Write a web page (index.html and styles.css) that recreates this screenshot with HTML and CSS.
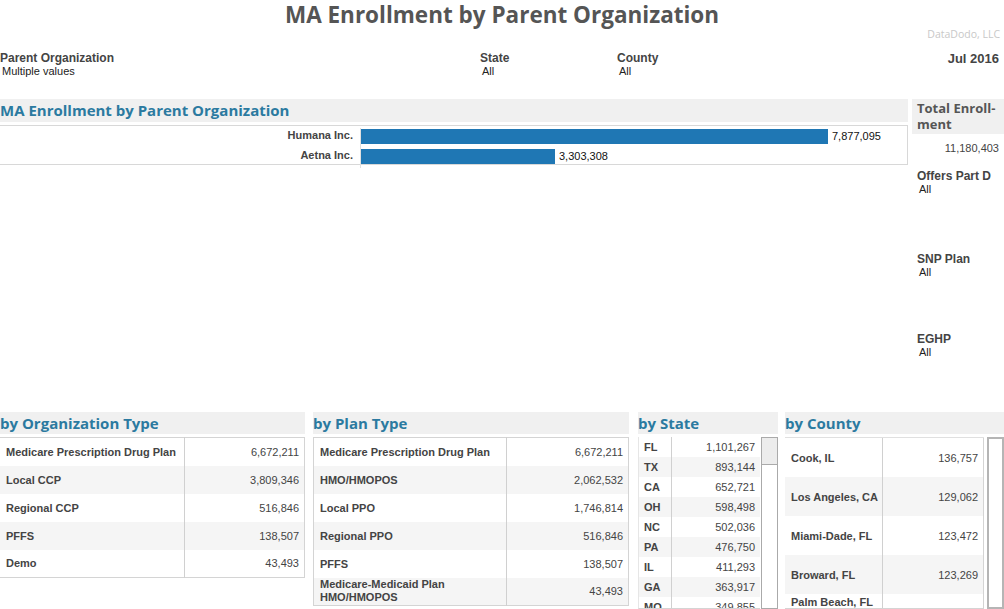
FILE: index.html
```html
<!DOCTYPE html>
<html>
<head>
<meta charset="utf-8">
<link rel="stylesheet" href="styles.css">
</head>
<body>
<div class="page">
  <h1 class="title">MA Enrollment by Parent Organization</h1>
  <div class="credit">DataDodo, LLC</div>
  <div class="filters">
    <div class="filter"><div class="f-label">Parent Organization</div><div class="f-value">Multiple values</div></div>
    <div class="filter"><div class="f-label">State</div><div class="f-value">All</div></div>
    <div class="filter"><div class="f-label">County</div><div class="f-value">All</div></div>
    <div class="date">Jul 2016</div>
  </div>

  <div class="middle">
    <div class="chart-panel">
      <div class="sec-head">MA Enrollment by Parent Organization</div>
      <div class="chart">
        <div class="bar-row"><div class="bar-label">Humana Inc.</div><div class="bar-track"><div class="bar" style="width:467px"></div><span class="bar-val">7,877,095</span></div></div>
        <div class="bar-row"><div class="bar-label">Aetna Inc.</div><div class="bar-track"><div class="bar" style="width:194px"></div><span class="bar-val">3,303,308</span></div></div>
      </div>
    </div>
    <div class="side">
      <div class="total-head">Total Enroll-<br>ment</div>
      <div class="total-val">11,180,403</div>
      <div class="side-filter sf1"><div class="f-label">Offers Part D</div><div class="f-value">All</div></div>
      <div class="side-filter sf2"><div class="f-label">SNP Plan</div><div class="f-value">All</div></div>
      <div class="side-filter sf3"><div class="f-label">EGHP</div><div class="f-value">All</div></div>
    </div>
  </div>

  <div class="bottom">
    <div class="panel p-org">
      <div class="sec-head small">by Organization Type</div>
      <table class="tbl t28">
        <tr><td class="k">Medicare Prescription Drug Plan</td><td class="v">6,672,211</td></tr>
        <tr><td class="k">Local CCP</td><td class="v">3,809,346</td></tr>
        <tr><td class="k">Regional CCP</td><td class="v">516,846</td></tr>
        <tr><td class="k">PFFS</td><td class="v">138,507</td></tr>
        <tr><td class="k">Demo</td><td class="v">43,493</td></tr>
      </table>
    </div>
    <div class="panel p-plan">
      <div class="sec-head small">by Plan Type</div>
      <table class="tbl t28 plan">
        <tr><td class="k">Medicare Prescription Drug Plan</td><td class="v">6,672,211</td></tr>
        <tr><td class="k">HMO/HMOPOS</td><td class="v">2,062,532</td></tr>
        <tr><td class="k">Local PPO</td><td class="v">1,746,814</td></tr>
        <tr><td class="k">Regional PPO</td><td class="v">516,846</td></tr>
        <tr><td class="k">PFFS</td><td class="v">138,507</td></tr>
        <tr><td class="k two">Medicare-Medicaid Plan<br>HMO/HMOPOS</td><td class="v">43,493</td></tr>
      </table>
    </div>
    <div class="panel p-state">
      <div class="sec-head small">by State</div>
      <div class="scroll-wrap">
        <div class="clip state-clip">
          <table class="tbl t20 state">
            <tr><td class="k">FL</td><td class="v">1,101,267</td></tr>
            <tr><td class="k">TX</td><td class="v">893,144</td></tr>
            <tr><td class="k">CA</td><td class="v">652,721</td></tr>
            <tr><td class="k">OH</td><td class="v">598,498</td></tr>
            <tr><td class="k">NC</td><td class="v">502,036</td></tr>
            <tr><td class="k">PA</td><td class="v">476,750</td></tr>
            <tr><td class="k">IL</td><td class="v">411,293</td></tr>
            <tr><td class="k">GA</td><td class="v">363,917</td></tr>
            <tr><td class="k">MO</td><td class="v">349,855</td></tr>
          </table>
        </div>
        <div class="scrollbar"><div class="thumb"></div></div>
      </div>
    </div>
    <div class="panel p-county">
      <div class="sec-head small">by County</div>
      <div class="scroll-wrap">
        <div class="clip county-clip">
          <table class="tbl t39 county">
            <tr><td class="k">Cook, IL</td><td class="v">136,757</td></tr>
            <tr><td class="k">Los Angeles, CA</td><td class="v">129,062</td></tr>
            <tr><td class="k">Miami-Dade, FL</td><td class="v">123,472</td></tr>
            <tr><td class="k">Broward, FL</td><td class="v">123,269</td></tr>
            <tr class="last"><td class="k">Palm Beach, FL</td><td class="v">118,004</td></tr>
          </table>
        </div>
        <div class="scrollbar county-bar"></div>
      </div>
    </div>
  </div>
</div>
</body>
</html>
```

FILE: styles.css
```css
* { box-sizing: border-box; }
html, body { margin: 0; padding: 0; background: #fff; }
body {
  width: 1004px;
  height: 609px;
  overflow: hidden;
  font-family: "Liberation Sans", Arial, sans-serif;
  color: #333;
}
.page { width: 1004px; }

.title {
  margin: 0;
  height: 29px;
  text-align: center;
  font-family: "Open Sans", "DejaVu Sans", sans-serif;
  font-weight: 700;
  font-size: 22.5px;
  line-height: 29px;
  color: #555;
}
.credit {
  height: 12px;
  text-align: right;
  padding-right: 4px;
  font-family: "Open Sans", sans-serif;
  font-size: 10.5px;
  line-height: 10px;
  color: #c8c8c8;
}
.filters {
  display: grid;
  grid-template-columns: 480px 137px 1fr auto;
  height: 58px;
  padding-top: 11px;
}
.f-label {
  font-weight: 700;
  font-size: 12px;
  line-height: 13px;
  color: #444;
}
.f-value {
  font-size: 11px;
  line-height: 13px;
  padding-left: 2px;
  color: #222;
}
.date {
  font-weight: 700;
  font-size: 13px;
  line-height: 14px;
  color: #444;
  padding-right: 5px;
}

.middle {
  display: flex;
  gap: 4px;
  height: 313px;
}
.chart-panel { width: 908px; }
.sec-head {
  background: #f0f0f0;
  height: 23px;
  font-family: "Open Sans", sans-serif;
  font-weight: 700;
  font-size: 15px;
  line-height: 23px;
  color: #2b7aa0;
  white-space: nowrap;
}
.sec-head.small { height: 22px; line-height: 23px; }
.chart {
  margin-top: 3px;
  height: 40px;
  border: 1px solid #d8d8d8;
  border-left: 0;
  padding-top: 2px;
}
.bar-row {
  display: flex;
  height: 20px;
  align-items: stretch;
}
.bar-label {
  width: 361px;
  text-align: right;
  padding-right: 7px;
  font-weight: 700;
  font-size: 11px;
  line-height: 15px;
  color: #444;
  border-right: 1px solid #e0e0e0;
}
.bar-track {
  display: flex;
  align-items: flex-start;
  gap: 4px;
  padding-top: 1px;
}
.bar {
  height: 15px;
  background: #1f77b4;
}
.bar-val {
  font-size: 11px;
  line-height: 15px;
  color: #111;
}

.side { width: 92px; }
.total-head {
  background: #f0f0f0;
  height: 35px;
  padding: 1px 0 0 5px;
  font-family: "Open Sans", sans-serif;
  font-weight: 700;
  font-size: 13px;
  line-height: 16px;
  color: #555;
}
.total-val {
  text-align: right;
  padding-right: 5px;
  margin-top: 8px;
  font-size: 11px;
  line-height: 13px;
  color: #444;
  height: 27px;
}
.side-filter { padding-left: 5px; }
.sf1 { height: 84px; padding-top: 1px; }
.sf2 { height: 80px; }
.sf3 { height: 30px; }

.bottom {
  display: flex;
  height: 197px;
}
.panel { display: flex; flex-direction: column; }
.p-org { width: 305px; }
.p-plan { width: 316px; margin-left: 8px; }
.p-state { width: 140px; margin-left: 9px; }
.p-county { width: 219px; margin-left: 7px; }

.tbl {
  border-collapse: collapse;
  margin-top: 3px;
  font-size: 11px;
  color: #444;
}
.tbl td { padding: 0; }
.tbl tr:nth-child(even) td { background: #f5f5f5; }
.tbl td.k {
  font-weight: 700;
  padding-left: 6px;
  border-right: 1px solid #d0d0d0;
  white-space: nowrap;
}
.tbl td.v {
  text-align: right;
  padding-right: 5px;
  color: #444;
}
.t28 {
  width: 100%;
  border: 1px solid #d4d4d4;
  border-left: 0;
}
.t28 td { height: 28px; }
.p-org .t28 td.k { width: 184px; }
.plan { border-left: 1px solid #d4d4d4; }
.plan td.k { width: 193px; }
.plan td.two { line-height: 13px; }

.scroll-wrap {
  display: flex;
  margin-top: 3px;
  height: 172px;
  overflow: hidden;
}
.clip { overflow: hidden; height: 172px; border-bottom: 1px solid #d4d4d4; }
.state-clip { width: 122px; border-left: 1px solid #e6e6e6; }
.county-clip { width: 199px; border-top: 1px solid #e0e0e0; }
.clip .tbl { margin-top: 0; width: 100%; }
.t20 td { height: 20px; }
.state td.k { width: 32px; padding-left: 5px; }
.t39 td { height: 39px; }
.county td.k { width: 97px; padding-left: 6px; }
.county td.v { border-right: 1px solid #d4d4d4; vertical-align: middle; }
.county tr.last td { vertical-align: top; padding-top: 2px; }
.county tr.last td.v { color: transparent; }

.scrollbar {
  width: 17px;
  margin-left: 1px;
  border: 1px solid #aaa;
  height: 172px;
}
.thumb {
  height: 27px;
  background: #ececec;
  border-bottom: 1px solid #aaa;
}
.county-bar {
  margin-left: 3px;
  width: 17px;
  border: 2px solid #b5b5b5;
  background: #fff;
}
```
